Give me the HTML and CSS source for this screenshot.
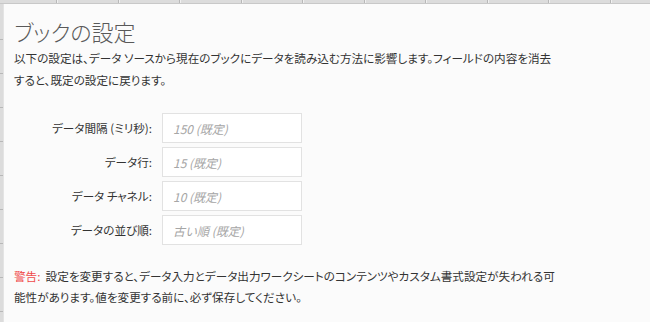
FILE: index.html
```html
<!DOCTYPE html>
<html lang="ja">
<head>
  <meta charset="UTF-8" />
  <title>ブックの設定</title>
  <link rel="stylesheet" href="styles.css">
</head>
<body>
  <!-- column headers of the sheet behind -->
  <div class="col-header"></div>

  <div class="page">
    <div class="row-header"></div>

    <div class="panel">
      <h1>ブックの設定</h1>
      <p class="intro">以下の設定は、データ ソースから現在のブックにデータを読み込む方法に影響します。フィールドの内容を消去<br>すると、既定の設定に戻ります。</p>

      <div class="form">
        <label for="interval">データ間隔 (ミリ秒):</label>
        <input id="interval" type="text" placeholder="150 (既定)">

        <label for="rows">データ行:</label>
        <input id="rows" type="text" placeholder="15 (既定)">

        <label for="channels">データ チャネル:</label>
        <input id="channels" type="text" placeholder="10 (既定)">

        <label for="order">データの並び順:</label>
        <input id="order" type="text" placeholder="古い順 (既定)">
      </div>

      <p class="warning"><span class="warn-label">警告:</span>&nbsp; 設定を変更すると、データ入力とデータ出力ワークシートのコンテンツやカスタム書式設定が失われる可<br>能性があります。値を変更する前に、必ず保存してください。</p>
    </div>
  </div>
</body>
</html>
```

FILE: styles.css
```css
body {
  margin: 0;
  padding: 0;
  background-color: #fbfbfb;
  color: #333;
  font-family: "Noto Sans CJK JP", "Noto Sans", sans-serif;
  font-feature-settings: "palt";
  overflow: hidden;
}

.col-header {
  height: 3px;
  border-bottom: 1px solid #c8c8c8;
  background-color: #dcdcdc;
  background-image: repeating-linear-gradient(to right, transparent 0, transparent 55px, #b8b8b8 55px, #b8b8b8 56px, #f0f0f0 56px, #f0f0f0 57px, transparent 57px, transparent 61.5px);
  background-position: 1px 0;
}

.page {
  display: flex;
}

.row-header {
  width: 3px;
  min-height: 318px;
  border-right: 1px solid #e4e4e4;
  background-color: #dcdcdc;
  background-image: repeating-linear-gradient(to bottom, transparent 0, transparent 28px, #b8b8b8 28px, #b8b8b8 29px, transparent 29px, transparent 34px);
  background-position: 0 7px;
}

.panel {
  padding-left: 10px;
  width: 600px;
}

h1 {
  margin: 14px 0 0 0;
  font-size: 22px;
  font-weight: 300;
  line-height: 26px;
  color: #595959;
}

.intro {
  margin: 3px 0 0 0;
  font-size: 11.6px;
  line-height: 22px;
  white-space: nowrap;
}

.form {
  display: grid;
  grid-template-columns: 138px 140px;
  column-gap: 10px;
  row-gap: 4px;
  margin-top: 22px;
}

.form label {
  text-align: right;
  font-size: 11.6px;
  line-height: 30px;
}

.form input {
  box-sizing: border-box;
  height: 30px;
  margin: 0;
  padding: 0 10px;
  border: 1px solid #e2e2e2;
  background-color: #fff;
  font-family: inherit;
  font-size: 12px;
  color: #333;
  outline: none;
}

.form input::placeholder {
  color: #a6a6a6;
  font-style: italic;
}

.warning {
  margin: 21px 0 0 0;
  font-size: 11.6px;
  line-height: 21px;
  white-space: nowrap;
}

.warn-label {
  color: #f04a4a;
}
```
